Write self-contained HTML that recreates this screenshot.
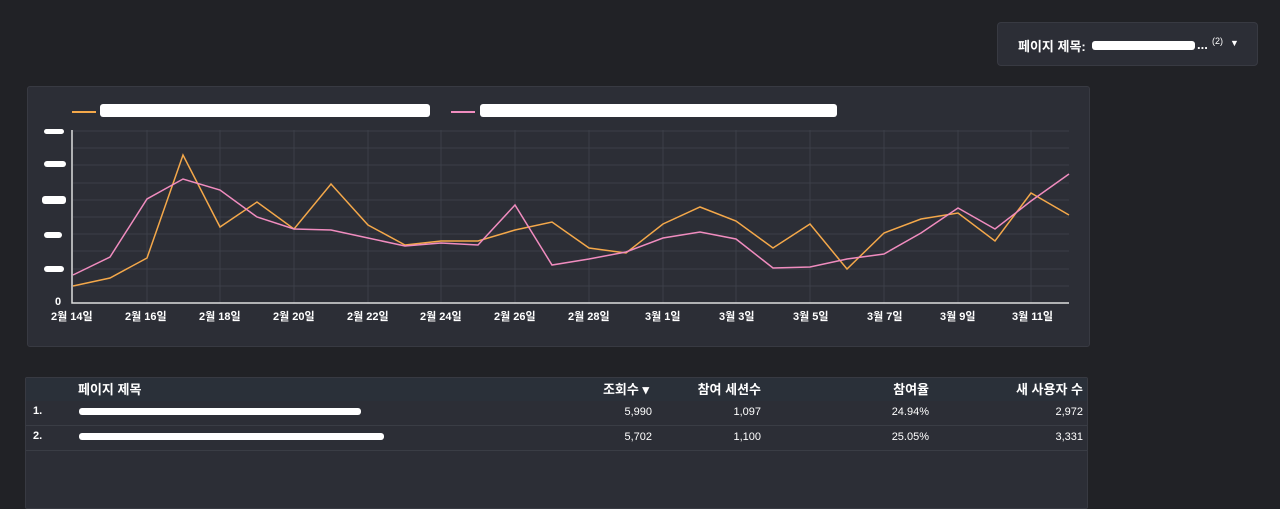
<html><head><style>
body{margin:0;width:1280px;height:496px;background:#212226;font-family:"Liberation Sans","Noto Sans CJK KR",sans-serif;color:#fff;position:relative;overflow:hidden}
.box{position:absolute;background:#2c2e36;border:1px solid #383a42;border-radius:3px}
.w{position:absolute;background:#fff;border-radius:3px}
.t{position:absolute;font-size:12px;white-space:nowrap}
.r{position:absolute;white-space:nowrap;text-align:right;font-size:11px}
.h{font-weight:bold;font-size:13px}
.x{font-size:11px;font-weight:bold}
</style></head><body>
<div class="box" style="left:997px;top:22px;width:259px;height:42px;border-radius:4px"></div>
<div class="t" style="left:1018px;top:36px;font-size:13px;font-weight:bold">페이지 제목:</div>
<div class="w" style="left:1092px;top:41px;width:103px;height:9px"></div>
<div class="t" style="left:1197px;top:37px;font-size:13px;font-weight:bold">...</div>
<div class="t" style="left:1212px;top:36px;font-size:9px">(2)</div>
<div class="t" style="left:1230px;top:38px;font-size:9px">▼</div>

<div class="box" style="left:27px;top:86px;width:1061px;height:259px"></div>
<div style="position:absolute;left:72px;top:111px;width:24px;height:2px;background:#f4a84a"></div>
<div class="w" style="left:100px;top:104px;width:330px;height:13px"></div>
<div style="position:absolute;left:451px;top:111px;width:24px;height:2px;background:#f08cbf"></div>
<div class="w" style="left:480px;top:104px;width:357px;height:13px"></div>
<svg style="position:absolute;left:0;top:0" width="1280" height="496">
<g stroke="#3c3f48" stroke-width="1">
<line x1="73" x2="1069" y1="131" y2="131"/><line x1="73" x2="1069" y1="148" y2="148"/><line x1="73" x2="1069" y1="165" y2="165"/><line x1="73" x2="1069" y1="183" y2="183"/><line x1="73" x2="1069" y1="200" y2="200"/><line x1="73" x2="1069" y1="217" y2="217"/><line x1="73" x2="1069" y1="234" y2="234"/><line x1="73" x2="1069" y1="251" y2="251"/><line x1="73" x2="1069" y1="269" y2="269"/><line x1="73" x2="1069" y1="286" y2="286"/>
<line x1="147" x2="147" y1="130" y2="303"/><line x1="220" x2="220" y1="130" y2="303"/><line x1="294" x2="294" y1="130" y2="303"/><line x1="368" x2="368" y1="130" y2="303"/><line x1="441" x2="441" y1="130" y2="303"/><line x1="515" x2="515" y1="130" y2="303"/><line x1="589" x2="589" y1="130" y2="303"/><line x1="663" x2="663" y1="130" y2="303"/><line x1="736" x2="736" y1="130" y2="303"/><line x1="810" x2="810" y1="130" y2="303"/><line x1="884" x2="884" y1="130" y2="303"/><line x1="958" x2="958" y1="130" y2="303"/><line x1="1031" x2="1031" y1="130" y2="303"/>
</g>
<path d="M72 130V303H1069" stroke="#ddd" fill="none" stroke-width="1.5"/>
<polyline fill="none" stroke="#f4a84a" stroke-width="1.5" points="73,286 110,278 147,258 183,155 220,227 257,202 294,229 331,184 368,225 405,245 441,241 478,241 515,230 552,222 589,248 626,253 663,224 700,207 736,221 773,248 810,224 847,269 884,233 921,219 958,213 995,241 1031,193 1069,215"/>
<polyline fill="none" stroke="#f08cbf" stroke-width="1.5" points="73,275 110,257 147,199 183,179 220,190 257,217 294,229 331,230 368,238 405,246 441,243 478,245 515,205 552,265 589,259 626,252 663,238 700,232 736,239 773,268 810,267 847,259 884,254 921,233 958,208 995,229 1031,201 1069,174"/>
</svg>
<div class="w" style="left:44px;top:129px;width:20px;height:5px"></div>
<div class="w" style="left:44px;top:161px;width:22px;height:6px"></div>
<div class="w" style="left:42px;top:196px;width:24px;height:8px"></div>
<div class="w" style="left:44px;top:232px;width:18px;height:6px"></div>
<div class="w" style="left:44px;top:266px;width:20px;height:6px"></div>
<div class="t x" style="left:55px;top:296px">0</div>
<div class="t x" style="left:51px;top:308px">2월 14일</div>
<div class="t x" style="left:125px;top:308px">2월 16일</div>
<div class="t x" style="left:199px;top:308px">2월 18일</div>
<div class="t x" style="left:273px;top:308px">2월 20일</div>
<div class="t x" style="left:347px;top:308px">2월 22일</div>
<div class="t x" style="left:420px;top:308px">2월 24일</div>
<div class="t x" style="left:494px;top:308px">2월 26일</div>
<div class="t x" style="left:568px;top:308px">2월 28일</div>
<div class="t x" style="left:645px;top:308px">3월 1일</div>
<div class="t x" style="left:719px;top:308px">3월 3일</div>
<div class="t x" style="left:793px;top:308px">3월 5일</div>
<div class="t x" style="left:867px;top:308px">3월 7일</div>
<div class="t x" style="left:940px;top:308px">3월 9일</div>
<div class="t x" style="left:1012px;top:308px">3월 11일</div>

<div class="box" style="left:25px;top:377px;width:1061px;height:130px;border-radius:2px"></div>
<div style="position:absolute;left:26px;top:378px;width:1061px;height:23px;background:#2a3039"></div>
<div style="position:absolute;left:26px;top:425px;width:1061px;height:1px;background:#3a3d45"></div>
<div style="position:absolute;left:26px;top:450px;width:1061px;height:1px;background:#3a3d45"></div>
<div class="t h" style="left:78px;top:379px">페이지 제목</div>
<div class="r h" style="right:631px;top:379px">조회수 ▾</div>
<div class="r h" style="right:519px;top:379px">참여 세션수</div>
<div class="r h" style="right:351px;top:379px">참여율</div>
<div class="r h" style="right:197px;top:379px">새 사용자 수</div>
<div class="t x" style="left:33px;top:405px">1.</div>
<div class="w" style="left:79px;top:408px;width:282px;height:7px"></div>
<div class="r" style="right:628px;top:406px">5,990</div>
<div class="r" style="right:519px;top:406px">1,097</div>
<div class="r" style="right:351px;top:406px">24.94%</div>
<div class="r" style="right:197px;top:406px">2,972</div>
<div class="t x" style="left:33px;top:430px">2.</div>
<div class="w" style="left:79px;top:433px;width:305px;height:7px"></div>
<div class="r" style="right:628px;top:431px">5,702</div>
<div class="r" style="right:519px;top:431px">1,100</div>
<div class="r" style="right:351px;top:431px">25.05%</div>
<div class="r" style="right:197px;top:431px">3,331</div>
</body></html>
